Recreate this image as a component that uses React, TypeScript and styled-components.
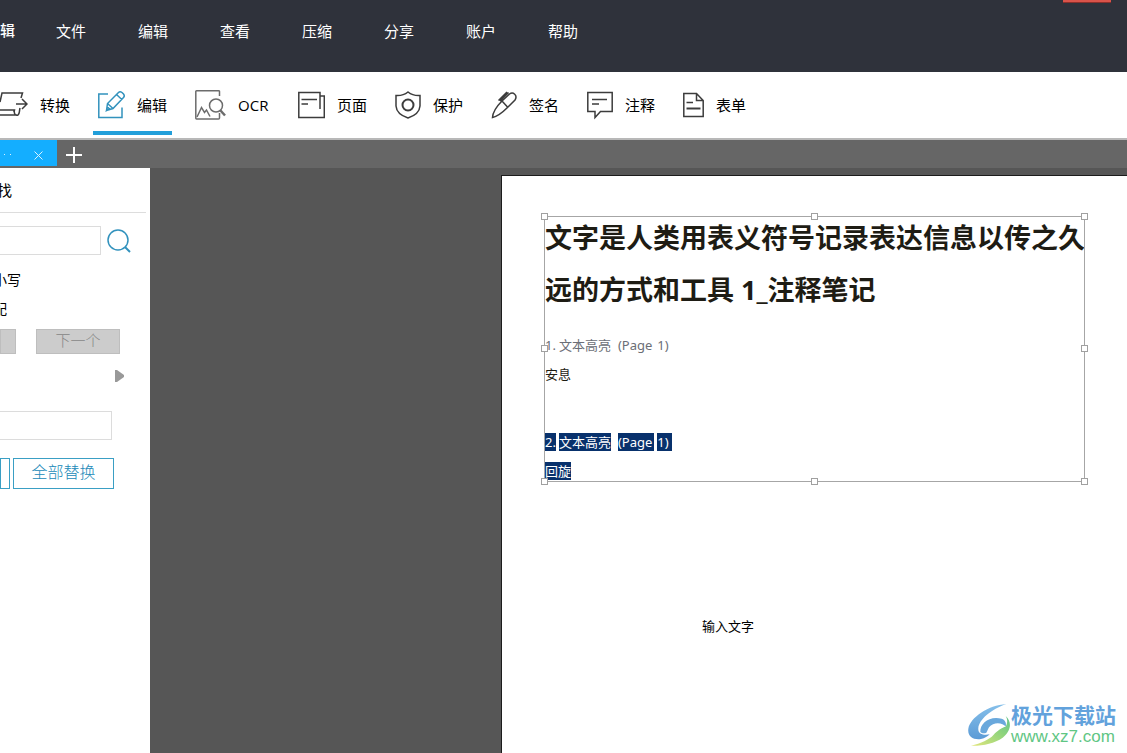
import React from "react";
import styled, { createGlobalStyle } from "styled-components";

const UI_FONT = `"Open Sans", "Noto Sans CJK SC", sans-serif`;

const GlobalStyle = createGlobalStyle`
  *, *::before, *::after { box-sizing: border-box; }
  body { margin: 0; font-family: ${UI_FONT}; font-size: 15px; color: #000; }
  button, input { font: inherit; color: inherit; }
  svg { display: block; flex: none; }
`;

const App = styled.div`
  position: relative;
  display: flex;
  flex-direction: column;
  min-height: 100vh;
  overflow: hidden;
`;

const Header = styled.header`
  position: relative;
  display: flex;
  align-items: center;
  height: 72px;
  padding-bottom: 10px;
  background: #2f323b;
  color: #fff;
`;

const AppName = styled.div`
  display: flex;
  justify-content: flex-end;
  width: 15px;
  padding-bottom: 4px;
  font-weight: 500;
`;

const Menu = styled.nav`
  display: flex;
  gap: 52px;
  margin-left: 41px;
`;

const MenuItem = styled.button`
  padding: 0;
  border: 0;
  background: none;
  line-height: 24px;
  white-space: nowrap;
  cursor: pointer;
`;

const CloseEdge = styled.button`
  position: absolute;
  top: 0;
  right: 16px;
  width: 48px;
  height: 3px;
  padding: 0;
  border: 0;
  border-bottom: 1px solid #8c2f2b;
  background: #d9534a;
`;

const Toolbar = styled.div`
  display: flex;
  gap: 18px;
  height: 68px;
  padding-bottom: 3px;
  background: #fff;
  border-bottom: 2px solid #b8b8b8;
`;

const Tool = styled.button<{ $active?: boolean; $flush?: boolean }>`
  display: flex;
  align-items: center;
  gap: 12px;
  padding: ${(p) => (p.$flush ? "6px 5px 0 0" : "6px 5px 0")};
  border: 0;
  border-bottom: 4px solid ${(p) => (p.$active ? "#229fda" : "transparent")};
  background: none;
  white-space: nowrap;
  cursor: pointer;
`;

const ToolLabel = styled.span<{ $wide?: boolean }>`
  min-width: ${(p) => (p.$wide ? 32 : 30)}px;
  text-align: left;
`;

const TabBar = styled.div`
  display: flex;
  height: 28px;
  background: #666;
`;

const Tab = styled.div`
  display: flex;
  align-items: center;
  justify-content: space-between;
  width: 57px;
  height: 26px;
  padding: 4px 13px 0 3px;
  background: #14aeff;
  color: #d9f2ff;
`;

const IconButton = styled.button`
  display: grid;
  place-items: center;
  padding: 0;
  border: 0;
  background: none;
  cursor: pointer;
`;

const NewTab = styled(IconButton)`
  width: 34px;
  padding-top: 2px;
`;

const Workspace = styled.div`
  display: flex;
  flex: 1;
  background: #565656;
`;

const Sidebar = styled.aside`
  display: flex;
  flex-direction: column;
  flex: none;
  width: 150px;
  background: #fff;
`;

const PanelTitle = styled.h2`
  display: flex;
  align-items: center;
  height: 45px;
  margin: 0 4px 0 0;
  padding-bottom: 2px;
  border-bottom: 1px solid #ddd;
  font-size: 15px;
  font-weight: 400;
`;

const Clipped = styled.span<{ $width: number }>`
  display: flex;
  justify-content: flex-end;
  flex: none;
  width: ${(p) => p.$width}px;
  white-space: nowrap;
`;

const SearchRow = styled.div`
  display: flex;
  align-items: center;
  gap: 6px;
  margin: 13px 0 9px;
`;

const Field = styled.input<{ $width: number }>`
  width: ${(p) => p.$width}px;
  height: 29px;
  padding: 0 6px;
  border: 1px solid #dcdcdc;
  border-left: 0;
  background: #fff;
  outline: none;
`;

const Option = styled.label`
  display: flex;
  align-items: center;
  height: 29px;
  font-size: 14px;
`;

const ButtonRow = styled.div<{ $gap: number; $top: number }>`
  display: flex;
  gap: ${(p) => p.$gap}px;
  margin-top: ${(p) => p.$top}px;
`;

const StepButton = styled.button<{ $width: number }>`
  width: ${(p) => p.$width}px;
  height: 25px;
  padding: 0 0 4px;
  border: 1px solid #bebebe;
  background: #ccc;
  color: #858585;
  font-weight: 300;
  line-height: 20px;
`;

const ReplaceButton = styled.button<{ $width: number }>`
  width: ${(p) => p.$width}px;
  height: 31px;
  padding: 0 0 4px;
  border: 1px solid #3a9fc4;
  background: #fff;
  color: #2089b8;
  font-size: 16px;
  font-weight: 300;
  line-height: 20px;
  white-space: nowrap;
`;

const Expander = styled(IconButton)`
  align-self: flex-end;
  margin: 16px 26px 29px 0;
`;

const Canvas = styled.main`
  display: flex;
  flex: 1;
  min-width: 0;
  padding: 7px 0 0 351px;
`;

const Sheet = styled.article`
  flex: 1;
  min-width: 0;
  padding: 36px 42px 0;
  border: solid #1c1c1c;
  border-width: 1px 0 0 1px;
  background: #fff;
  font-family: "Noto Sans", "Noto Sans CJK SC", sans-serif;
`;

const TextBlock = styled.section`
  position: relative;
  width: 541px;
  padding: 0 0 0 1px;
  font-size: 13px;
  color: #1e1c14;
`;

const Frame = styled.div`
  position: absolute;
  inset: 4px 0 3px;
  border: 1px solid #a6a6a6;
  pointer-events: none;
`;

const Handle = styled.i<{ $x: number; $y: number }>`
  position: absolute;
  left: ${(p) => p.$x}%;
  top: ${(p) => p.$y}%;
  width: 7px;
  height: 7px;
  margin: ${(p) => (p.$y === 100 ? -3 : -4)}px 0 0 ${(p) => (p.$x === 100 ? -3 : -4)}px;
  border: 1px solid #a0a0a0;
  background: #fff;
`;

const Title = styled.h1`
  margin: 0 0 14px;
  font-size: 27px;
  font-weight: 700;
  line-height: 52px;
  white-space: nowrap;
`;

const Line = styled.p<{ $muted?: boolean; $spaced?: boolean }>`
  display: flex;
  align-items: center;
  height: 29px;
  margin: 0 0 ${(p) => (p.$spaced ? 39 : 0)}px;
  color: ${(p) => (p.$muted ? "#6b6e76" : "inherit")};
`;

const Word = styled.span<{ $selected?: boolean; $gap?: number; $pad?: number }>`
  margin-right: ${(p) => p.$gap ?? 0}px;
  padding-right: ${(p) => p.$pad ?? 0}px;
  line-height: 18px;
  white-space: nowrap;
  background: ${(p) => (p.$selected ? "#08316c" : "transparent")};
  color: ${(p) => (p.$selected ? "#fff" : "inherit")};
`;

const Note = styled.p`
  margin: 132px 0 0 158px;
  font-family: "Liberation Serif", "Noto Sans CJK SC", serif;
  font-size: 13px;
  line-height: 20px;
`;

const Watermark = styled.a`
  position: absolute;
  right: 11px;
  bottom: 7px;
  display: flex;
  align-items: center;
  gap: 1px;
  text-decoration: none;
`;

const SiteName = styled.span`
  display: block;
  color: #62a2dc;
  font-size: 21px;
  font-weight: 700;
  line-height: 24px;
`;

const SiteUrl = styled.span`
  display: block;
  color: #5fc684;
  font-family: "Liberation Sans", sans-serif;
  font-size: 17px;
  line-height: 19px;
`;

type IconProps = { w: number; h?: number; color?: string; sw?: number; children: React.ReactNode };
const Icon = ({ w, h = 30, color = "#3c3c3c", sw = 1.5, children }: IconProps) => (
  <svg width={w} height={h} viewBox={`0 0 ${w} ${h}`} fill="none" stroke={color} strokeWidth={sw} aria-hidden="true">
    {children}
  </svg>
);

const tools = [
  {
    label: "转换",
    icon: (
      <Icon w={28}>
        <path d="M0 12 2 3H22.5L21 8M0 20H14.5C13.500 24 16 26 18 25C20 23 19 22 20 18M0 25H17M14 20V22" />
        <path d="M16 14H27M22 9l5 5-5 5" />
      </Icon>
    ),
  },
  {
    label: "编辑",
    active: true,
    icon: (
      <Icon w={27} color="#3292bd">
        <path d="M10 4H.8V27.500H24V17.500" />
        <path d="M8.500 20.500 9.500 13.500 20.500 2.500Q22 1 24 2.500L25.500 4Q27 6 25.500 7.500L15 18.500ZM9.500 13.500 15 18.500M18.500 4.500 23.800 9.500M8.500 20.500l3-1.500-2-2z" />
      </Icon>
    ),
  },
  {
    label: "OCR",
    wide: true,
    icon: (
      <Icon w={31} color="#6c6c6c">
        <path d="M24.500 6V1.500Q24.500.8 23.500.8H1.500Q.8.8.8 1.500V28.300Q.8 29 1.500 29H23.500Q24.500 29 24.500 28V23" />
        <path d="M2 27 6.500 17.500 9.500 22.500 11.500 20 15 26.500" />
        <circle cx="21" cy="15.500" r="6.500" />
        <path d="M25.500 20.500 30 25.500" strokeWidth="2.500" />
      </Icon>
    ),
  },
  {
    label: "页面",
    icon: (
      <Icon w={27}>
        <path d="M22 19V2.500H.8V27.500H26.300V6H22" />
        <path d="M3.500 9.500H19M3.500 14H10" />
      </Icon>
    ),
  },
  {
    label: "保护",
    icon: (
      <Icon w={26}>
        <path d="M13 2Q18 6 25 5.500V16C24.500 23 19 26 13 28C7 26 1.500 23 1 16V5.500Q8 6 13 2Z" />
        <circle cx="13" cy="15" r="5.500" strokeWidth="2" />
      </Icon>
    ),
  },
  {
    label: "签名",
    icon: (
      <Icon w={26}>
        <path d="M1.500 27.500C2 20 7 15 11 11L18.500 4C22 1.500 27 5 24 10L16.500 17.500C12 22 8 26 1.500 27.500ZM11 11l5.500 6M9 11 17.500 2.500M7.500 10.500 16 2" />
      </Icon>
    ),
  },
  {
    label: "注释",
    icon: (
      <Icon w={26}>
        <path d="M.8 2.500H25.200V21.500H13.500L8 27.500V21.500H.8ZM5 9.500H20M5 14H12" />
      </Icon>
    ),
  },
  {
    label: "表单",
    icon: (
      <Icon w={21}>
        <path d="M.8 3.500H13.500L20.200 10.500V26.500H.8ZM13.500 3.500V10.500H20.200M3.500 12.500H10" />
        <path d="M3.500 18.500H17.500" strokeWidth="2" />
      </Icon>
    ),
  },
];

const menu = ["文件", "编辑", "查看", "压缩", "分享", "账户", "帮助"];

const handles = [
  [0, 0], [50, 0], [100, 0], [0, 50], [100, 50], [0, 100], [50, 100], [100, 100],
];

export default function EditorPage() {
  return (
    <App>
      <GlobalStyle />
      <Header>
        <AppName>辑</AppName>
        <Menu>
          {menu.map((m) => (
            <MenuItem key={m}>{m}</MenuItem>
          ))}
        </Menu>
        <CloseEdge aria-label="关闭" />
      </Header>

      <Toolbar>
        {tools.map((t, i) => (
          <Tool key={t.label} $active={t.active} $flush={i === 0}>
            {t.icon}
            <ToolLabel $wide={t.wide}>{t.label}</ToolLabel>
          </Tool>
        ))}
      </Toolbar>

      <TabBar>
        <Tab>
          <svg width="12" height="4" viewBox="0 0 12 4" fill="currentColor" aria-hidden="true">
            <path d="M1 1h1v1H1zM7 1h1v1H7z" />
          </svg>
          <IconButton aria-label="关闭标签">
            <Icon w={11} h={11} color="#d9f2ff" sw={1}>
              <path d="M1.500 1.500l8 8M9.500 1.500l-8 8" />
            </Icon>
          </IconButton>
        </Tab>
        <NewTab aria-label="新建标签">
          <Icon w={16} h={16} color="#fff" sw={2}>
            <path d="M8 0V16M0 8H16" />
          </Icon>
        </NewTab>
      </TabBar>

      <Workspace>
        <Sidebar>
          <PanelTitle>
            <Clipped $width={12}>找</Clipped>
          </PanelTitle>
          <SearchRow>
            <Field $width={101} aria-label="查找" />
            <IconButton aria-label="搜索">
              <Icon w={24} h={24} color="#3292bd">
                <circle cx="11" cy="11" r="10" />
                <path d="M18 18l5 5" strokeWidth="2" />
              </Icon>
            </IconButton>
          </SearchRow>
          <Option>
            <Clipped $width={21}>小写</Clipped>
          </Option>
          <Option>
            <Clipped $width={7}>配</Clipped>
          </Option>
          <ButtonRow $gap={20} $top={7}>
            <StepButton $width={16} aria-label="上一个" />
            <StepButton $width={84}>下一个</StepButton>
          </ButtonRow>
          <Expander aria-label="展开">
            <svg width="9" height="12" viewBox="0 0 9 12" aria-hidden="true">
              <path d="M0 0H2L9 5V7L2 12H0Z" fill="#999" />
            </svg>
          </Expander>
          <Field $width={112} aria-label="替换为" />
          <ButtonRow $gap={3} $top={18}>
            <ReplaceButton $width={10} aria-label="替换" />
            <ReplaceButton $width={101}>全部替换</ReplaceButton>
          </ButtonRow>
        </Sidebar>

        <Canvas>
          <Sheet>
            <TextBlock>
              <Title>
                文字是人类用表义符号记录表达信息以传之久
                <br />
                远的方式和工具 1_注释笔记
              </Title>
              <Line $muted>
                <Word $gap={3}>1.</Word>
                <Word $gap={7}>文本高亮</Word>
                <Word $gap={3} $pad={2}>(Page</Word>
                <Word>1)</Word>
              </Line>
              <Line $spaced>
                <Word>安息</Word>
              </Line>
              <Line>
                <Word $selected $gap={3}>2.</Word>
                <Word $selected $gap={7}>文本高亮</Word>
                <Word $selected $gap={3} $pad={2}>(Page</Word>
                <Word $selected $pad={3}>1)</Word>
              </Line>
              <Line>
                <Word $selected>回旋</Word>
              </Line>
              <Frame>
                {handles.map(([x, y]) => (
                  <Handle key={`${x}-${y}`} $x={x} $y={y} />
                ))}
              </Frame>
            </TextBlock>
            <Note>输入文字</Note>
          </Sheet>
        </Canvas>
      </Workspace>

      <Watermark href="#">
        <svg width="42" height="42" viewBox="21 14 126 126" aria-hidden="true">
          <defs>
            <linearGradient id="swirlBlue" x1="0" y1="0" x2="0" y2="1">
              <stop offset="0" stopColor="#86c0ea" />
              <stop offset="1" stopColor="#5c9bd6" />
            </linearGradient>
            <linearGradient id="swirlGreen" x1="0" y1="1" x2="1" y2="0">
              <stop offset="0" stopColor="#e3e67c" />
              <stop offset=".6" stopColor="#8fd47c" />
              <stop offset="1" stopColor="#62c48c" />
            </linearGradient>
          </defs>
          <path d="M136 14C80 18 28 55 22 88C19 112 36 122 60 119C72 117 80 111 86 105C68 109 50 104 52 86C55 60 90 30 136 14Z" fill="url(#swirlBlue)" />
          <path d="M58 98C56 72 86 48 122 58C133 62 137 72 134 82C126 70 98 66 84 84C80 90 80 94 76 100C70 103 62 102 58 98Z" fill="#69a8dc" />
          <path d="M134 50C154 68 150 96 125 115C100 132 65 140 30 139C60 131 84 122 98 106C108 94 124 84 134 82C140 72 140 60 134 50Z" fill="url(#swirlGreen)" />
        </svg>
        <span>
          <SiteName>极光下载站</SiteName>
          <SiteUrl>www.xz7.com</SiteUrl>
        </span>
      </Watermark>
    </App>
  );
}
